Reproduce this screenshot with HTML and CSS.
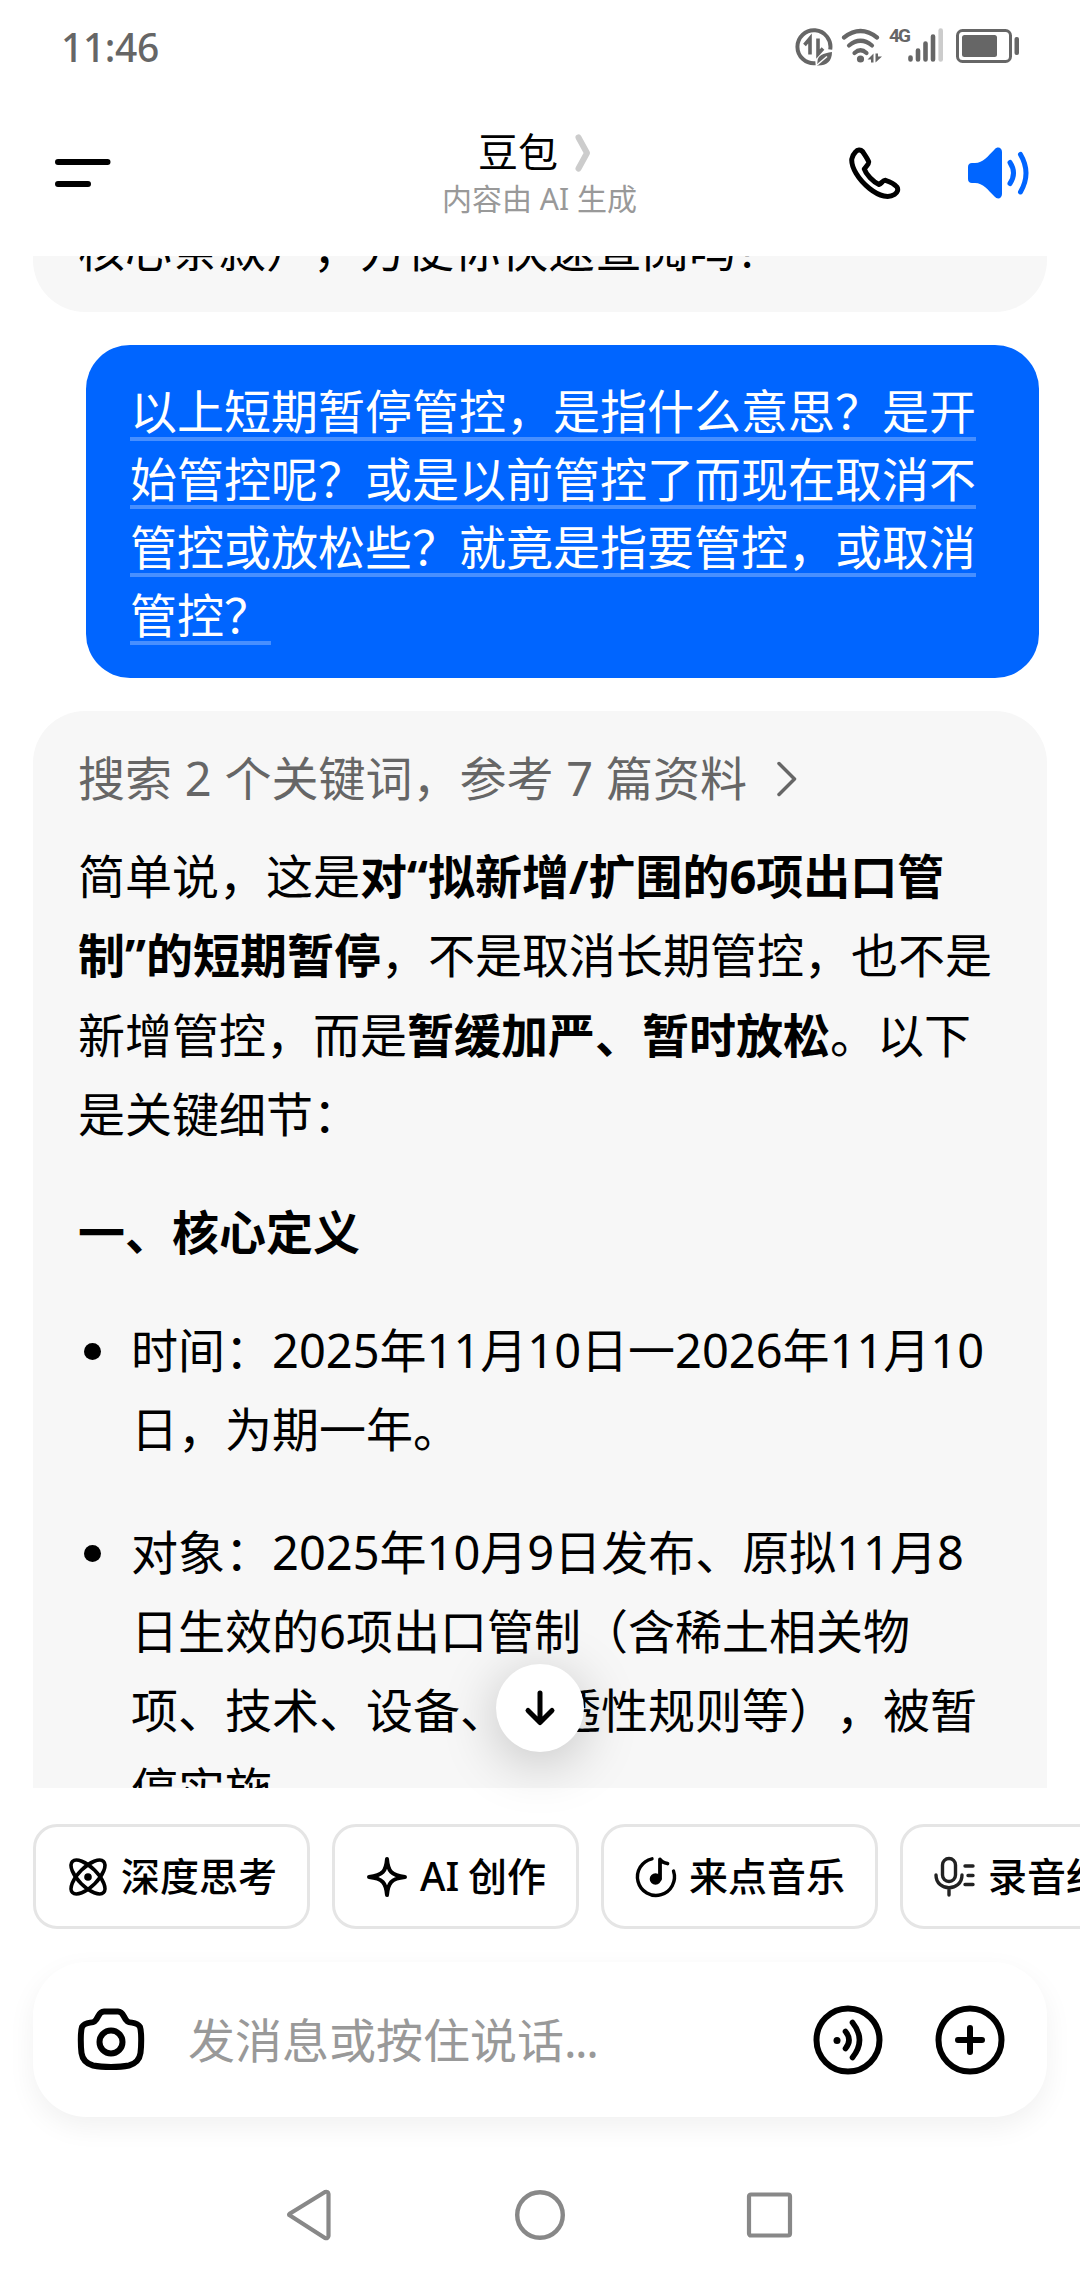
FILE: index.html
```html
<!DOCTYPE html>
<html lang="zh-CN">
<head>
    <meta charset="UTF-8">
    <title>豆包</title>
    <link rel="stylesheet" href="styles.css">
</head>
<body>
<div class="status-bar">
    <span class="time">11:46</span>
    <div class="status-icons">
        <svg class="icon-eco" width="38" height="38" viewBox="0 0 38 38">
            <path d="M35.2 21.500A16.500 16.500 0 1 0 20.500 35.200" fill="none" stroke="#666" stroke-width="4"/>
            <path d="M9.500 17L15 10.500V26.500M23 10.500V26L28 20.500" fill="none" stroke="#666" stroke-width="3.600"/>
            <path d="M37 24C28 25 22.500 28 22.500 33.500L22 37.500C31 38 37 34 37 24Z" fill="#666"/>
            <path d="M22 37L32 28.500" stroke="#fff" stroke-width="1.500"/>
        </svg>
        <svg class="icon-wifi" width="42" height="36" viewBox="0 0 42 36">
            <g fill="none" stroke="#666" stroke-width="4.200" stroke-linecap="round">
                <path d="M3 9.500Q19.500 -3.500 36 9.500"/>
                <path d="M8 17.500Q19.500 8 31 17.500"/>
                <path d="M13.500 25Q19.500 19.500 25.500 25"/>
            </g>
            <circle cx="19.500" cy="31" r="3.600" fill="#666"/>
            <path d="M26.500 31.500L32.500 25.500V34.500H30V31.500ZM34.500 25.500H37V28.500H41L34.500 34.500Z" fill="#666"/>
        </svg>
        <span class="net">4G</span>
        <svg class="icon-signal" width="36" height="34" viewBox="0 0 36 34">
            <g stroke="#666" stroke-width="4.600" stroke-linecap="round">
                <path d="M2.500 29.500V31.500M10 22.500V31.500M17.500 15.500V31.500M25 8.500V31.500"/>
                <path d="M32.700 2.500V31.500" stroke="#ccc"/>
            </g>
        </svg>
        <svg class="icon-battery" width="64" height="34" viewBox="0 0 64 34">
            <rect x="1.500" y="1.500" width="53" height="31" rx="5" fill="none" stroke="#666" stroke-width="3"/>
            <rect x="6" y="6" width="35" height="22" rx="2.500" fill="#666"/>
            <rect x="58.500" y="8" width="4.500" height="18" rx="2" fill="#666"/>
        </svg>
    </div>
</div>

<div class="header">
    <svg class="menu" width="56" height="30" viewBox="0 0 56 30">
        <path d="M3 4H52.500M3 26H33" stroke="#000" stroke-width="6" stroke-linecap="round"/>
    </svg>
    <div class="title">
        <div class="name">豆包
            <svg width="18" height="40" viewBox="0 0 18 40">
                <path d="M4.500 4.500L13 20L4.500 35.500" fill="none" stroke="#ccc" stroke-width="6" stroke-linecap="round" stroke-linejoin="round"/>
            </svg>
        </div>
        <div class="sub">内容由 AI 生成</div>
    </div>
    <div class="actions">
        <svg width="52" height="54" viewBox="0 0 52 54">
            <path d="M6.500 6C8.500 3.500 11.500 3.200 13.500 5.500C15.500 8.500 18 12 19.600 15.500C20.600 17.800 17 20 15.300 23C17 28.500 24 35.500 30 38.500C32.500 37.500 34 34 36.500 34.300C40.500 35.500 45.500 38 48 41C49.500 43.500 48.500 46.500 45.500 48.500C40 52 31 51 20.500 42.500C9 33 2 21 2.800 13C3.200 10 4.500 8 6.500 6Z" fill="none" stroke="#000" stroke-width="5" stroke-linejoin="round"/>
        </svg>
        <svg width="64" height="54" viewBox="0 0 64 54">
            <path d="M5 17H8C16 17 21 10 27.500 3.500C30.500 0 35 1.500 35 6V48C35 52.500 30.500 54 27.500 50.500C21 44 16 37 8 37H5C2.500 37 1 35.500 1 33V21C1 18.500 2.500 17 5 17Z" fill="#0065ff"/>
            <path d="M43 16.500Q50 27 43 37.500M53.500 8.500Q64.500 27 53.500 46" fill="none" stroke="#0065ff" stroke-width="5" stroke-linecap="round"/>
        </svg>
    </div>
</div>

<div class="main">
    <div class="chat">
        <div class="bot prev">核心条款），方便你快速查阅吗？</div>
        <div class="user"><span>以上短期暂停管控，是指什么意思？是开<br>始管控呢？或是以前管控了而现在取消不<br>管控或放松些？就竟是指要管控，或取消<br>管控？</span></div>
        <div class="bot">
            <div class="source">搜索 2 个关键词，参考 7 篇资料
                <svg width="22" height="38" viewBox="0 0 22 38">
                    <path d="M3 3.500L18.500 19L3 34.500" fill="none" stroke="#666" stroke-width="3.500" stroke-linecap="round" stroke-linejoin="round"/>
                </svg>
            </div>
            <p>简单说，这是<b>对“拟新增/扩围的6项出口管<br>制”的短期暂停</b>，不是取消长期管控，也不是<br>新增管控，而是<b>暂缓加严、暂时放松</b>。以下<br>是关键细节：</p>
            <h3>一、核心定义</h3>
            <ul>
                <li>时间：2025年11月10日一2026年11月10<br>日，为期一年。</li>
                <li>对象：2025年10月9日发布、原拟11月8<br>日生效的6项出口管制（含稀土相关物<br>项、技术、设备、穿透性规则等），被暂<br>停实施。</li>
            </ul>
        </div>
    </div>
    <div class="to-bottom">
        <svg width="36" height="40" viewBox="0 0 36 40">
            <path d="M18 5V34M6 22.500L18 34.500L30 22.500" fill="none" stroke="#000" stroke-width="5" stroke-linecap="round" stroke-linejoin="round"/>
        </svg>
    </div>
</div>

<div class="chips">
    <div class="chip">
        <svg width="44" height="44" viewBox="0 0 44 44">
            <g fill="none" stroke="#000" stroke-width="3.600">
                <ellipse cx="22" cy="22" rx="22" ry="9.500" transform="rotate(45 22 22)"/>
                <ellipse cx="22" cy="22" rx="22" ry="9.500" transform="rotate(-45 22 22)"/>
            </g>
            <circle cx="22" cy="22" r="3.800"/>
        </svg>
        <span>深度思考</span>
    </div>
    <div class="chip">
        <svg width="44" height="44" viewBox="0 0 44 44">
            <path d="M22 4C23 16 26 20.500 40 22C26 23.500 23 28 22 40C21 28 18 23.500 4 22C18 20.500 21 16 22 4Z" fill="none" stroke="#000" stroke-width="4" stroke-linejoin="round"/>
        </svg>
        <span>AI 创作</span>
    </div>
    <div class="chip">
        <svg width="44" height="44" viewBox="0 0 44 44">
            <path d="M18 3.800A18.500 18.500 0 1 0 39.500 16" fill="none" stroke="#000" stroke-width="3.400" stroke-linecap="round"/>
            <path d="M26 24V4.500Q28 7.500 33.500 8.500" fill="none" stroke="#000" stroke-width="3.800" stroke-linecap="round" stroke-linejoin="round"/>
            <circle cx="21.500" cy="24" r="5.800"/>
        </svg>
        <span>来点音乐</span>
    </div>
    <div class="chip">
        <svg width="44" height="44" viewBox="0 0 44 44">
            <g fill="none" stroke="#222" stroke-width="3.400" stroke-linecap="round">
                <rect x="9.500" y="3.500" width="13" height="23" rx="6.500"/>
                <path d="M3 20C3 37 29 37 29 20M16 33.500V40M32 11H40M35 20.500H40M32 29.500H40"/>
            </g>
        </svg>
        <span>录音纪要</span>
    </div>
</div>

<div class="composer">
    <svg width="70" height="70" viewBox="0 0 70 70">
        <path d="M28 6.500H42C48 6.500 47 13 51.500 16.500C55 18.500 61 16.500 64 22C65.500 26 65.500 40 64.500 48C63.500 55 60 58.500 53 60.500C43 62.500 27 62.500 17 60.500C10 58.500 6.500 55 5.500 48C4.500 40 4.500 26 6 22C9 16.500 15 18.500 18.500 16.500C23 13 22 6.500 28 6.500Z" fill="none" stroke="#000" stroke-width="6" stroke-linejoin="round"/>
        <circle cx="35" cy="37" r="11.500" fill="none" stroke="#000" stroke-width="6"/>
    </svg>
    <span class="placeholder">发消息或按住说话<span class="dots">...</span></span>
    <svg width="70" height="70" viewBox="0 0 70 70">
        <circle cx="35" cy="35" r="31.500" fill="none" stroke="#000" stroke-width="6"/>
        <circle cx="24" cy="35.500" r="3.500"/>
        <path d="M32.500 26.500Q39.500 35 32.500 43.500M39.500 17.500Q53.500 35 39.500 52.500" fill="none" stroke="#000" stroke-width="5.600" stroke-linecap="round"/>
    </svg>
    <svg width="70" height="70" viewBox="0 0 70 70">
        <circle cx="35" cy="35" r="31.500" fill="none" stroke="#000" stroke-width="6"/>
        <path d="M35 23V47M23 35H47" stroke="#000" stroke-width="6" stroke-linecap="round"/>
    </svg>
</div>

<div class="nav">
    <svg width="52" height="52" viewBox="0 0 52 52">
        <path d="M5 26.500Q3 26 5 24.500L40 3Q43 2 43.500 5V47Q43 50 40 49Z" fill="none" stroke="#888" stroke-width="4.200" stroke-linejoin="round"/>
    </svg>
    <svg width="52" height="52" viewBox="0 0 52 52">
        <circle cx="26" cy="26" r="22.800" fill="none" stroke="#888" stroke-width="4.400"/>
    </svg>
    <svg width="52" height="52" viewBox="0 0 52 52">
        <rect x="6" y="5.500" width="41" height="41" rx="2" fill="none" stroke="#888" stroke-width="4.200"/>
    </svg>
</div>
</body>
</html>
```
FILE: styles.css
```css
* {
    box-sizing: border-box;
}

body {
    display: flex;
    flex-direction: column;
    width: 1080px;
    height: 2280px;
    margin: 0;
    overflow: hidden;
    background: #fff;
    color: #000;
    font-family: "Noto Sans", "Noto Sans CJK SC", sans-serif;
    font-size: 47px;
    white-space: nowrap;
    text-spacing-trim: space-all;
}

svg {
    display: block;
    flex: none;
}

.status-bar {
    display: flex;
    justify-content: space-between;
    height: 92px;
    padding: 0 60px 0 61px;
}

.time {
    font-size: 39px;
    font-weight: 500;
    line-height: 94px;
    letter-spacing: -.4px;
    color: #666;
}

.status-icons {
    display: flex;
    align-items: flex-start;
    padding-top: 28px;
}

.icon-eco {
    margin-right: 8px;
}

.icon-wifi {
    margin-right: 6px;
}

.net {
    width: 19px;
    font-family: Roboto, sans-serif;
    font-size: 19px;
    font-weight: 700;
    line-height: 16px;
    letter-spacing: -2px;
    color: #666;
}

.icon-battery {
    margin: 1px 0 0 12px;
}

.header {
    display: grid;
    grid-template-columns: 300px 1fr 300px;
    height: 164px;
    padding: 0 49px 0 55px;
}

.menu {
    margin-top: 66px;
}

.title {
    padding-top: 32px;
    text-align: center;
}

.name {
    display: flex;
    justify-content: center;
    gap: 16px;
    padding-right: 16px;
    font-size: 40px;
    line-height: 56px;
}

.name svg {
    margin-top: 9px;
}

.sub {
    margin-top: -2px;
    padding-right: 7px;
    font-size: 30px;
    line-height: 42px;
    color: #999;
}

.actions {
    display: flex;
    justify-content: flex-end;
    gap: 66px;
    padding-top: 54px;
}

.main {
    position: relative;
    height: 1532px;
}

.chat {
    display: flex;
    flex-direction: column;
    height: 1532px;
    overflow: hidden;
}

.bot {
    flex: none;
    margin: 0 33px;
    padding: 28px 45px 40px;
    border-radius: 52px;
    background: #f7f7f7;
    line-height: 79.2px;
}

.prev {
    margin-top: -46px;
    padding: 0 45px 23px;
    border-radius: 0 0 52px 52px;
}

.user {
    flex: none;
    align-self: flex-end;
    width: 953px;
    height: 333px;
    margin: 33px 41px;
    padding: 32px 44px 0;
    border-radius: 44px;
    background: #0065ff;
    color: #fff;
    line-height: 68px;
}

.user span {
    text-decoration: underline 4px rgba(255, 255, 255, .28);
    text-decoration-skip-ink: none;
    text-underline-offset: 8px;
}

.source {
    display: flex;
    align-items: center;
    gap: 29px;
    height: 79px;
    color: #666;
    word-spacing: .6px;
}

p {
    margin: 19px 0 39px;
}

h3 {
    margin: 0 0 39px;
    font-size: 47px;
}

ul {
    margin: 0;
    padding: 0 0 0 53px;
    list-style: none;
}

li {
    position: relative;
    margin-bottom: 43px;
}

li::before {
    content: "";
    position: absolute;
    left: -47px;
    top: 32px;
    width: 17px;
    height: 17px;
    border-radius: 50%;
    background: #000;
}

.to-bottom {
    position: absolute;
    left: 496px;
    bottom: 36px;
    display: flex;
    align-items: center;
    justify-content: center;
    width: 88px;
    height: 88px;
    border-radius: 50%;
    background: #fff;
    box-shadow: 0 10px 56px rgba(0, 0, 0, .22);
}

.chips {
    display: flex;
    gap: 22px;
    padding: 36px 0 33px 33px;
    overflow: hidden;
}

.chip {
    display: flex;
    flex: none;
    align-items: center;
    gap: 11px;
    height: 105px;
    padding: 0 30px;
    border: 3px solid #e5e5e5;
    border-radius: 24px;
    font-size: 39px;
    font-weight: 500;
}

.chip span {
    margin-bottom: 5px;
    word-spacing: -1.5px;
}

.composer {
    display: flex;
    flex: none;
    align-items: center;
    height: 155px;
    margin: 0 33px;
    padding: 0 42px 0 43px;
    border-radius: 54px;
    box-shadow: 0 10px 28px rgba(0, 0, 0, .06);
}

.placeholder {
    flex: 1;
    padding: 0 0 4px 42px;
    color: #999;
}

.dots {
    letter-spacing: -1.5px;
}

.composer svg + svg {
    margin-left: 52px;
}

.nav {
    display: flex;
    justify-content: space-between;
    margin-top: 72px;
    padding: 0 285px 0 285px;
}
```
